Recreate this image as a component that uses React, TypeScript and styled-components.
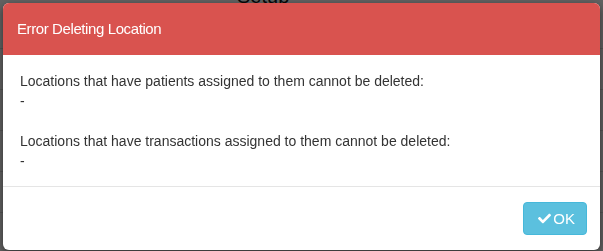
import { FC } from "react";
import styled, { createGlobalStyle } from "styled-components";
import { FaCheck } from "react-icons/fa";

const GlobalStyle = createGlobalStyle`
html, body {
    margin: 0;
    padding: 0;
    background: #fff;
    font-family: "Liberation Sans", Arial, sans-serif;
    font-size: 14px;
    color: #333;
}
`;

const Page = styled.div`
width: 603px;
height: 251px;
overflow: hidden;
`;

const PageTitle = styled.h1`
margin: 0;
margin-top: -16px;
padding-left: 237px;
font-size: 20px;
font-weight: normal;
line-height: 24px;
color: #111;
`;

const TableRow = styled.div`
height: 40px;
border-bottom: 1px solid #ddd;
`;

const Backdrop = styled.div`
position: fixed;
inset: 0;
background: rgba(0, 0, 0, 0.62);
`;

const Dialog = styled.div`
position: fixed;
left: 3px;
top: 3px;
width: 597px;
height: 247px;
background: #fff;
border-radius: 6px;
overflow: hidden;
box-shadow: 0 3px 9px rgba(0, 0, 0, 0.5);
display: flex;
flex-direction: column;
`;

const Header = styled.div`
background: #d9534f;
height: 53px;
box-sizing: border-box;
padding: 14px 14px 0;
`;

const Title = styled.h4`
margin: 0;
font-family: "Liberation Sans", Arial, sans-serif;
font-size: 15px;
letter-spacing: -0.4px;
font-weight: normal;
line-height: 24px;
color: #fff;
`;

const Body = styled.div`
padding: 16px 17px 15px;
line-height: 20px;
border-bottom: 1px solid #e5e5e5;
`;

const Message = styled.p<{ last?: boolean }>`
margin: 0 0 ${(p) => (p.last ? "0" : "20px")};
`;

const Footer = styled.div`
display: flex;
justify-content: flex-end;
padding: 15px 13px;
`;

const OkButton = styled.button`
display: flex;
align-items: center;
gap: 2px;
height: 33px;
padding: 0 11px 0 14px;
border: 1px solid #46b8da;
border-radius: 4px;
background: #5bc0de;
color: #fff;
font-family: "Liberation Sans", Arial, sans-serif;
font-size: 15px;
cursor: pointer;

& svg {
    width: 13px;
    height: 13px;
}
`;

const App: FC = () => {
    return (
        <>
            <GlobalStyle />
            <Page>
                <PageTitle>Setup</PageTitle>
                <TableRow />
                <TableRow />
                <TableRow />
                <TableRow />
                <TableRow />
            </Page>
            <Backdrop />
            <Dialog>
                <Header>
                    <Title>Error Deleting Location</Title>
                </Header>
                <Body>
                    <Message>
                        Locations that have patients assigned to them cannot be deleted:
                        <br />-
                    </Message>
                    <Message last>
                        Locations that have transactions assigned to them cannot be deleted:
                        <br />-
                    </Message>
                </Body>
                <Footer>
                    <OkButton>
                        <FaCheck />
                        OK
                    </OkButton>
                </Footer>
            </Dialog>
        </>
    );
};

export default App;
